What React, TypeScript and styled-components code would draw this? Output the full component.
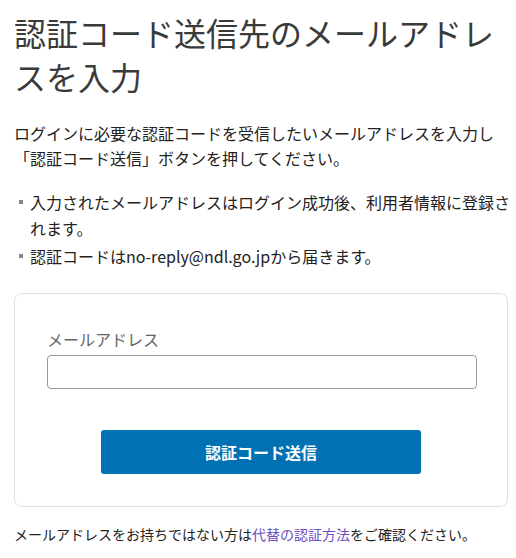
import styled, { createGlobalStyle } from 'styled-components';

const GlobalStyle = createGlobalStyle`
  html, body {
    margin: 0;
    padding: 0;
    background: #ffffff;
  }
  body {
    font-family: "Noto Sans CJK JP", "Noto Sans", sans-serif;
    color: #222222;
  }
`;

const Page = styled.main`
  padding: 10px 5px 20px 14px;
  display: flex;
  flex-direction: column;
`;

const Title = styled.h1`
  margin: 0;
  font-size: 32px;
  font-weight: 400;
  line-height: 44px;
  color: #3a3a3a;
`;

const Lead = styled.p`
  margin: 23px 0 0;
  font-size: 16px;
  line-height: 25px;
`;

const Notes = styled.ul`
  list-style: none;
  margin: 18px 0 0;
  padding: 0;
  display: flex;
  flex-direction: column;
  gap: 2px;
`;

const Note = styled.li`
  position: relative;
  padding-left: 16px;
  font-size: 16px;
  line-height: 26px;

  &::before {
    content: '';
    position: absolute;
    left: 5px;
    top: 11px;
    width: 4px;
    height: 4px;
    background: #888888;
  }
`;

const Card = styled.section`
  margin: 24px 3px 0 0;
  border: 1px solid #dddddd;
  border-radius: 8px;
  padding: 33px 32px 32px;
  display: flex;
  flex-direction: column;
`;

const Label = styled.label`
  font-size: 16px;
  line-height: 24px;
  color: #666666;
`;

const Input = styled.input`
  margin-top: 4px;
  box-sizing: border-box;
  width: 430px;
  height: 34px;
  border: 1px solid #999999;
  border-radius: 4px;
  padding: 0 8px;
  font-size: 16px;
  font-family: inherit;
`;

const Actions = styled.div`
  margin-top: 41px;
  display: flex;
  padding-left: 54px;
`;

const SubmitButton = styled.button`
  width: 320px;
  height: 44px;
  border: none;
  border-radius: 3px;
  background: #0072b3;
  color: #ffffff;
  font-family: inherit;
  font-size: 16px;
  font-weight: 700;
  cursor: pointer;
`;

const Footer = styled.p`
  margin: 16px 0 0;
  font-size: 14px;
  line-height: 22px;
`;

const Link = styled.a`
  color: #6a4fc4;
  text-decoration: none;
`;

export default function App() {
  return (
    <>
      <GlobalStyle />
      <Page>
        <Title>認証コード送信先のメールアドレスを入力</Title>
        <Lead>
          ログインに必要な認証コードを受信したいメールアドレスを入力し
          <br />
          「認証コード送信」ボタンを押してください。
        </Lead>
        <Notes>
          <Note>入力されたメールアドレスはログイン成功後、利用者情報に登録されます。</Note>
          <Note>認証コードはno-reply@ndl.go.jpから届きます。</Note>
        </Notes>
        <Card>
          <Label htmlFor="mail">メールアドレス</Label>
          <Input id="mail" type="email" />
          <Actions>
            <SubmitButton type="button">認証コード送信</SubmitButton>
          </Actions>
        </Card>
        <Footer>
          メールアドレスをお持ちではない方は<Link href="#">代替の認証方法</Link>をご確認ください。
        </Footer>
      </Page>
    </>
  );
}
